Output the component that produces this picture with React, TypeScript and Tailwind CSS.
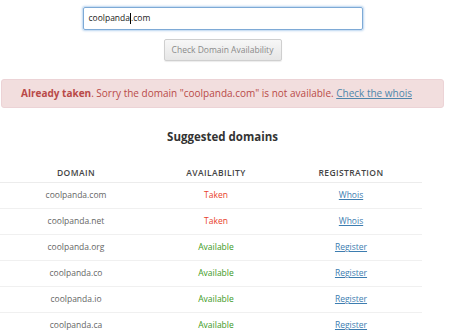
import React from 'react'

const rows = [
  { domain: 'coolpanda.com', taken: true },
  { domain: 'coolpanda.net', taken: true },
  { domain: 'coolpanda.org', taken: false },
  { domain: 'coolpanda.co', taken: false },
  { domain: 'coolpanda.io', taken: false },
  { domain: 'coolpanda.ca', taken: false },
]

export default function App() {
  return (
    <div className="w-[450px] h-[334px] overflow-hidden bg-white font-['Open_Sans',sans-serif]">
      <div className="w-[445px] flex flex-col items-center pt-[7px]">
        {/* search box */}
        <div className="w-[280px] h-[23px] border border-[#7eaad6] rounded-[2px] shadow-[0_0_2px_1px_rgba(102,160,220,0.45)] flex items-center pl-[5px] text-[8.5px] text-[#222]">
          <span>coolpanda</span>
          <span className="w-px h-[11px] bg-black"></span>
          <span>.com</span>
        </div>

        <button className="mt-[9px] w-[118px] h-[22px] border border-[#cfcfcf] rounded-[2px] bg-gradient-to-b from-[#f7f7f7] to-[#e6e6e6] shadow-[0_1px_1px_rgba(0,0,0,0.08)] text-[8.5px] text-[#8a8a8a]">
          Check Domain Availability
        </button>

        {/* alert */}
        <div className="self-start ml-px mt-[18px] w-[443px] h-[29px] bg-[#f2dede] border border-[#ecd3d6] rounded-[3px] flex items-center pl-[19px] text-[10px] text-[#b94a48]">
          <p>
            <b className="font-bold">Already taken</b>. Sorry the domain "coolpanda.com" is not available.{' '}
            <a className="text-[#4f86ab] underline">Check the whois</a>
          </p>
        </div>

        <h2 className="mt-[20px] text-[11.5px] font-bold text-[#333]">Suggested domains</h2>
      </div>

      {/* table */}
      <div className="w-[422px] mt-[20px]">
        <div className="grid grid-cols-[152px_128px_142px] h-[18px] items-center border-b border-[#ececec] text-[8.5px] font-semibold tracking-[0.4px] text-[#444] text-center">
          <span>DOMAIN</span>
          <span>AVAILABILITY</span>
          <span>REGISTRATION</span>
        </div>
        {rows.map((r) => (
          <div key={r.domain} className="grid grid-cols-[152px_128px_142px] h-[26px] items-center border-b border-[#f0f0f0] text-[8.5px] text-center">
            <span className="text-[#666]">{r.domain}</span>
            <span className={r.taken ? 'text-[#e8412c]' : 'text-[#3c9a1e]'}>{r.taken ? 'Taken' : 'Available'}</span>
            <span><a className="text-[#3d7db0] underline">{r.taken ? 'Whois' : 'Register'}</a></span>
          </div>
        ))}
      </div>
    </div>
  )
}
